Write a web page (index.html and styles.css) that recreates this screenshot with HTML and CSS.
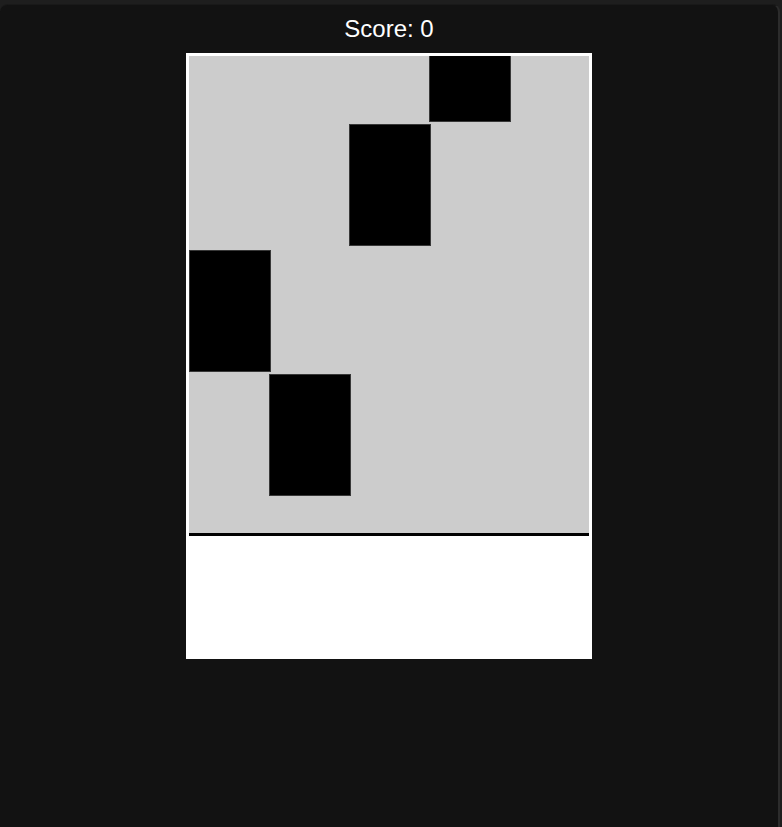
FILE: index.html
```html
<!DOCTYPE html>
<html>
<head>
<meta charset="utf-8">
<title>Piano Tiles</title>
<link rel="stylesheet" href="styles.css">
</head>
<body>
<div class="window">
  <div class="score">Score: 0</div>
  <div class="board">
    <div class="field">
      <div class="tile" style="left:240px;top:-56px"></div>
      <div class="tile" style="left:160px;top:68px"></div>
      <div class="tile" style="left:0px;top:194px"></div>
      <div class="tile" style="left:80px;top:318px"></div>
    </div>
    <div class="line"></div>
    <div class="pad"></div>
  </div>
</div>
</body>
</html>
```
FILE: styles.css
```css
html, body {
  margin: 0;
  padding: 0;
  height: 100%;
}
body {
  background: #1e1e1e;
  font-family: "Liberation Sans", Arial, sans-serif;
  overflow: hidden;
}
.window {
  margin-top: 4px;
  width: 780px;
  height: 823px;
  background: #121212;
  border-right: 2px solid #2c2c2c;
  border-top: 1px solid #191919;
  border-radius: 8px 8px 0 0;
  box-sizing: border-box;
  padding-top: 10px;
}
.score {
  color: #ffffff;
  font-size: 24px;
  line-height: 28px;
  text-align: center;
  margin-bottom: 10px;
}
.board {
  width: 400px;
  height: 600px;
  margin: 0 auto;
  border: 3px solid #ffffff;
  background: #ffffff;
  display: flex;
  flex-direction: column;
}
.field {
  position: relative;
  height: 477px;
  background: #cccccc;
  overflow: hidden;
}
.tile {
  position: absolute;
  width: 80px;
  height: 120px;
  background: #000000;
  border: 1px solid #383838;
}
.line {
  height: 3px;
  background: #000000;
}
.pad {
  flex: 1;
  background: #ffffff;
}
```
